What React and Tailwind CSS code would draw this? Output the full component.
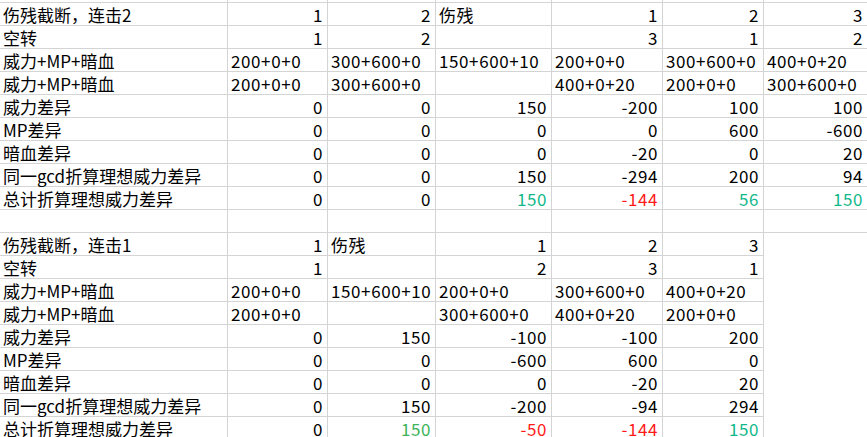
import React from 'react';

// spreadsheet rows: [text, align, color]
const G = 'text-[#12b88a]';
const G2 = 'text-[#3db35a]';
const R = 'text-[#ff1a1a]';

const top = [
  [['伤残截断，连击2', 'l'], ['1'], ['2'], ['伤残', 'l'], ['1'], ['2'], ['3']],
  [['空转', 'l'], ['1'], ['2'], [''], ['3'], ['1'], ['2']],
  [['威力+MP+暗血', 'l'], ['200+0+0', 'l'], ['300+600+0', 'l'], ['150+600+10', 'l'], ['200+0+0', 'l'], ['300+600+0', 'l'], ['400+0+20', 'l']],
  [['威力+MP+暗血', 'l'], ['200+0+0', 'l'], ['300+600+0', 'l'], [''], ['400+0+20', 'l'], ['200+0+0', 'l'], ['300+600+0', 'l']],
  [['威力差异', 'l'], ['0'], ['0'], ['150'], ['-200'], ['100'], ['100']],
  [['MP差异', 'l'], ['0'], ['0'], ['0'], ['0'], ['600'], ['-600']],
  [['暗血差异', 'l'], ['0'], ['0'], ['0'], ['-20'], ['0'], ['20']],
  [['同一gcd折算理想威力差异', 'l'], ['0'], ['0'], ['150'], ['-294'], ['200'], ['94']],
  [['总计折算理想威力差异', 'l'], ['0'], ['0'], ['150', 'r', G], ['-144', 'r', R], ['56', 'r', G], ['150', 'r', G]],
];

const bottom = [
  [['伤残截断，连击1', 'l'], ['1'], ['伤残', 'l'], ['1'], ['2'], ['3'], ['', 'n']],
  [['空转', 'l'], ['1'], [''], ['2'], ['3'], ['1'], ['', 'n']],
  [['威力+MP+暗血', 'l'], ['200+0+0', 'l'], ['150+600+10', 'l'], ['200+0+0', 'l'], ['300+600+0', 'l'], ['400+0+20', 'l'], ['', 'n']],
  [['威力+MP+暗血', 'l'], ['200+0+0', 'l'], [''], ['300+600+0', 'l'], ['400+0+20', 'l'], ['200+0+0', 'l'], ['', 'n']],
  [['威力差异', 'l'], ['0'], ['150'], ['-100'], ['-100'], ['200'], ['', 'n']],
  [['MP差异', 'l'], ['0'], ['0'], ['-600'], ['600'], ['0'], ['', 'n']],
  [['暗血差异', 'l'], ['0'], ['0'], ['0'], ['-20'], ['20'], ['', 'n']],
  [['同一gcd折算理想威力差异', 'l'], ['0'], ['150'], ['-200'], ['-94'], ['294'], ['', 'n']],
  [['总计折算理想威力差异', 'l'], ['0'], ['150', 'r', G2], ['-50', 'r', R], ['-144', 'r', R], ['150', 'r', G], ['', 'n']],
];

const blank = [[''], [''], [''], [''], [''], [''], ['']];

function Cell({ text, align, color, last, first }) {
  const border = align === 'n' ? '' : last ? 'border-b' : 'border-b border-r';
  return (
    <div
      className={`h-[23px] border-[#d4d4d4] ${border} ${align === 'l' ? 'justify-start pl-[3px]' : 'justify-end pr-[4px]'} ${first ? '' : 'tracking-[0.6px]'} ${color || 'text-black'} flex items-center overflow-visible whitespace-nowrap leading-none`}
    >
      {text}
    </div>
  );
}

export default function App() {
  const rows = [...top, blank, ...bottom];
  return (
    <div
      className="w-[867px] h-[437px] overflow-hidden bg-white text-[17px]"
      style={{ fontFamily: '"Noto Sans CJK SC", "Noto Sans", sans-serif' }}
    >
      <div className="grid grid-cols-[228px_100px_108px_116px_111px_101px_1fr]">
        {blank.map((_, i) => (
          <div key={'t' + i} className={`h-[3px] border-b border-[#d4d4d4] ${i < 6 ? 'border-r' : ''}`} />
        ))}
        {rows.map((row, r) =>
          row.map(([text, align = 'r', color], c) => (
            <Cell key={r + '-' + c} text={text} align={align} color={color} last={c === 6} first={c === 0} />
          ))
        )}
      </div>
    </div>
  );
}
